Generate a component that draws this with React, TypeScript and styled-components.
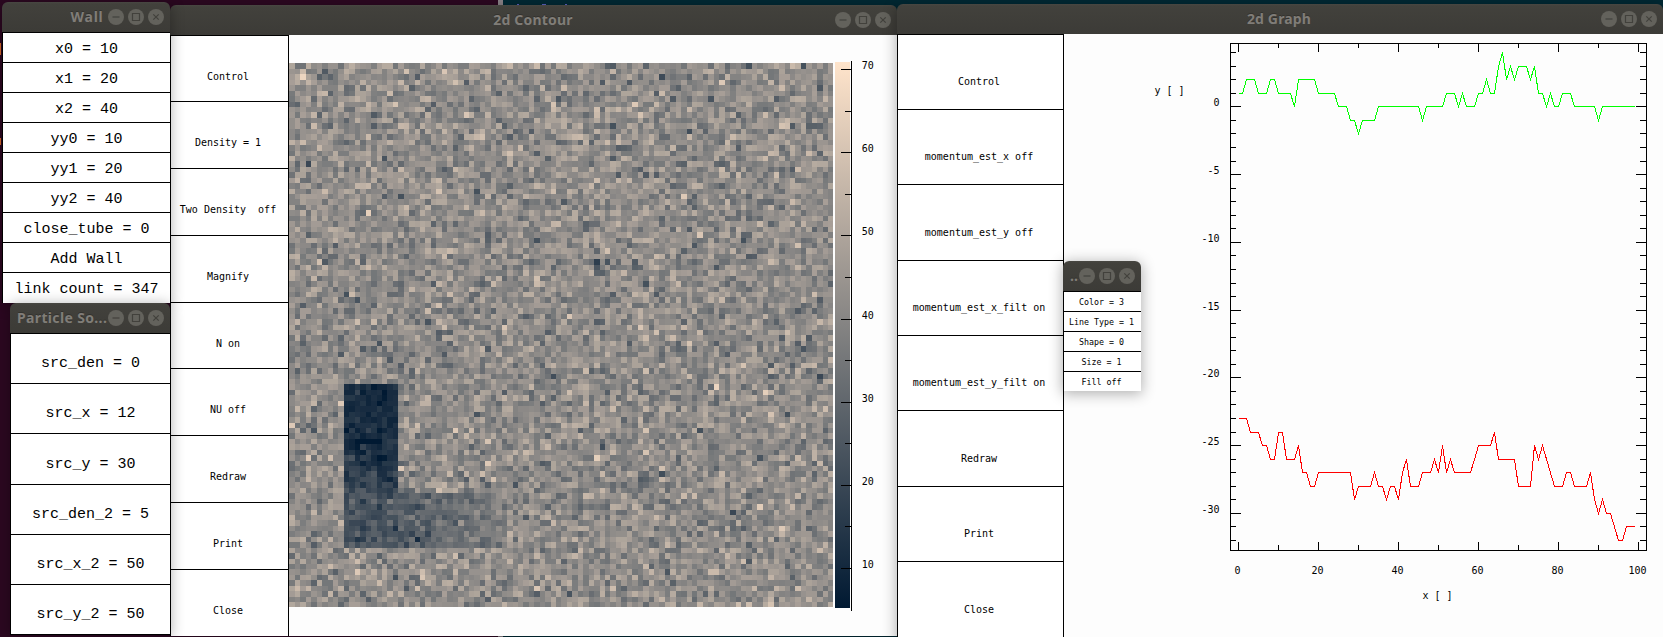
import React, { useLayoutEffect, useRef } from "react";
import styled, { createGlobalStyle, css } from "styled-components";

const GlobalStyle = createGlobalStyle`
  html, body { margin: 0; padding: 0; overflow: hidden; }
  *, *::before, *::after { box-sizing: border-box; }
`;

const MONO = `"Liberation Mono", monospace`;
const MONO_SMALL = `"DejaVu Sans Mono", monospace`;

const Desktop = styled.div`
  position: relative;
  width: 1663px;
  height: 637px;
  overflow: hidden;
  background: linear-gradient(
    to right,
    #2c0821 0 498px,
    #8b8389 498px 503px,
    #002934 503px
  );
`;

const Speck = styled.i<{ $x: number; $y: number; $w: number; $h: number; $color: string }>`
  position: absolute;
  left: ${(p) => p.$x}px;
  top: ${(p) => p.$y}px;
  width: ${(p) => p.$w}px;
  height: ${(p) => p.$h}px;
  background: ${(p) => p.$color};
`;

const Window = styled.section<{ $x: number; $y: number; $w: number; $h: number; $z: number }>`
  position: absolute;
  left: ${(p) => p.$x}px;
  top: ${(p) => p.$y}px;
  width: ${(p) => p.$w}px;
  height: ${(p) => p.$h}px;
  z-index: ${(p) => p.$z};
  display: flex;
  flex-direction: column;
  border-radius: 6px 6px 0 0;
  box-shadow: 0 2px 14px 1px rgba(0, 0, 0, 0.3);
`;

const TitleBar = styled.header`
  display: flex;
  align-items: center;
  flex: none;
  height: 30px;
  padding: 0 6px 0 7px;
  border-radius: 6px 6px 0 0;
  background: linear-gradient(#484742 0, #42413c 2px, #3c3b37 100%);
`;

const Title = styled.h1<{ $align: "center" | "left"; $shift: number; $spacing: number }>`
  flex: 1;
  min-width: 0;
  margin: 0 0 0 ${(p) => p.$shift}px;
  overflow: hidden;
  white-space: pre;
  text-align: ${(p) => p.$align};
  font: 700 14px/20px "Noto Sans", sans-serif;
  letter-spacing: ${(p) => p.$spacing}px;
  color: #807d78;
  text-shadow: 0 -1px 0 #33322e;
`;

const Buttons = styled.div`
  display: flex;
  flex: none;
  gap: 4px;
`;

const RoundButton = styled.svg`
  display: block;
  width: 16px;
  height: 16px;
  fill: none;
  stroke: #42413c;
  stroke-width: 1.2;
`;

const Body = styled.div`
  display: flex;
  flex: 1;
  min-height: 0;
  background: #fdfdfd;
`;

type MenuSize = "large" | "medium" | "tiny";

const menuFont = {
  large: css`
    padding-right: 0;
    font: 15px/16px ${MONO};
  `,
  medium: css`
    padding-right: 3px;
    font: 10px/12px ${MONO_SMALL};
  `,
  tiny: css`
    padding-right: 2px;
    font: 8.3px/10px ${MONO_SMALL};
  `,
};

const MenuColumn = styled.div<{ $w: number; $edge?: boolean }>`
  display: flex;
  flex-direction: column;
  flex: none;
  width: ${(p) => p.$w}px;
  border-left: 1px solid #000;
  border-right: ${(p) => (p.$edge ? "1px solid #000" : "none")};
  background: #fff;
`;

const MenuItem = styled.div<{ $h: number; $size: MenuSize; $drop: number }>`
  display: flex;
  flex: none;
  align-items: center;
  justify-content: center;
  height: ${(p) => p.$h}px;
  padding-top: ${(p) => p.$drop}px;
  border-top: 1px solid #000;
  color: #000;
  white-space: pre;
  ${(p) => menuFont[p.$size]}
`;

const BottomRule = styled.div`
  height: 1px;
  background: #000;
`;

const FieldArea = styled.div`
  display: flex;
  flex: 1;
  min-width: 0;
  padding-top: 26px;
`;

const FieldCanvas = styled.canvas`
  display: block;
  flex: none;
  width: 544px;
  height: 544px;
  margin: 2px 0 0;
`;

const Drawing = styled.svg`
  display: block;
  flex: none;
  font: 10px ${MONO_SMALL};
`;

function WindowButtons() {
  return (
    <Buttons>
      {["M4.5 8h7", "M4.5 4.5h7v7h-7z", "M5.3 5.3l5.4 5.4M10.7 5.3l-5.4 5.4"].map((d) => (
        <RoundButton key={d} viewBox="0 0 16 16">
          <circle cx="8" cy="8" r="8" fill="#63625c" stroke="none" />
          <path d={d} />
        </RoundButton>
      ))}
    </Buttons>
  );
}

function Frame(props: {
  title: string;
  x: number;
  y: number;
  w: number;
  h: number;
  z: number;
  align?: "center" | "left";
  shift?: number;
  spacing?: number;
  children: React.ReactNode;
}) {
  return (
    <Window $x={props.x} $y={props.y} $w={props.w} $h={props.h} $z={props.z}>
      <TitleBar>
        <Title
          $align={props.align ?? "center"}
          $shift={props.shift ?? 0}
          $spacing={props.spacing ?? 0.15}
        >
          {props.title}
        </Title>
        <WindowButtons />
      </TitleBar>
      <Body>{props.children}</Body>
    </Window>
  );
}

function Menu(props: {
  items: string[];
  heights: number[];
  width: number;
  size: MenuSize;
  drop: number;
  edge?: boolean;
  closed?: boolean;
}) {
  return (
    <MenuColumn $w={props.width} $edge={props.edge}>
      {props.items.map((label, i) => (
        <MenuItem key={label} $h={props.heights[i]} $size={props.size} $drop={props.drop}>
          {label}
        </MenuItem>
      ))}
      {props.closed && <BottomRule />}
    </MenuColumn>
  );
}

/* Density field: Poisson-like noise around a mean, with an evacuated L-shaped tube. */
const CELLS = 100;

function makeRandom(seed: number) {
  let s = seed;
  return () => {
    s = (s + 0x6d2b79f5) | 0;
    let t = Math.imul(s ^ (s >>> 15), 1 | s);
    t = (t + Math.imul(t ^ (t >>> 7), 61 | t)) ^ t;
    return ((t ^ (t >>> 14)) >>> 0) / 4294967296;
  };
}

function meanDensity(col: number, row: number) {
  if (row < 59 || row > 88 || col < 10 || col > 39) return 42;
  if (col < 20) {
    if (row === 69 && col > 11 && col < 17) return 3;
    if (row < 70) return 11;
    if (row < 79) return 12 + (row - 70) * (col > 15 ? 0.6 : 1.2);
    return 24;
  }
  return row < 79 ? 42 : 26 + (col - 20) * 0.6;
}

function densityColor(v: number) {
  const t = Math.max(-1, Math.min(1, (v - 38) / 32.8));
  const end = t < 0 ? [0, 25, 50] : [255, 228, 203];
  const k = Math.abs(t);
  const c = end.map((e) => Math.round(128 + (e - 128) * k));
  return `rgb(${c[0]},${c[1]},${c[2]})`;
}

function DensityField() {
  const ref = useRef<HTMLCanvasElement>(null);
  useLayoutEffect(() => {
    const ctx = ref.current!.getContext("2d")!;
    const rnd = makeRandom(347);
    const edge = (i: number) => Math.ceil(i * 5.44 - 1e-6);
    for (let row = 0; row < CELLS; row++) {
      for (let col = 0; col < CELLS; col++) {
        const mean = meanDensity(col, row);
        const g = Math.sqrt(-2 * Math.log(rnd() + 1e-9)) * Math.cos(2 * Math.PI * rnd());
        const spread = Math.sqrt(mean) * (mean < 42 ? 0.85 : 1);
        ctx.fillStyle = densityColor(Math.round(mean + g * spread));
        ctx.fillRect(edge(col), edge(row), edge(col + 1) - edge(col), edge(row + 1) - edge(row));
      }
    }
  }, []);
  return <FieldCanvas ref={ref} width={544} height={544} />;
}

function ColorScale() {
  const y = (v: number) => Math.round(8 + (70 - v) * 8.317);
  const ticks = Array.from({ length: 13 }, (_, i) => 70 - i * 5);
  return (
    <Drawing width="64" height="560" viewBox="0 0 64 560">
      <defs>
        <linearGradient id="scale" x1="0" y1="0" x2="0" y2="1">
          <stop offset="0" stopColor="#ffe4cb" />
          <stop offset="0.5" stopColor="#808080" />
          <stop offset="1" stopColor="#001932" />
        </linearGradient>
      </defs>
      <rect x="2" y="1" width="15" height="546" fill="url(#scale)" />
      <g shapeRendering="crispEdges">
        <rect x="18" y="0" width="1" height="550" />
        {ticks.map((v) => (
          <rect key={v} x={v % 10 ? 12 : 8} y={y(v)} width={v % 10 ? 6 : 10} height="1" />
        ))}
      </g>
      {ticks
        .filter((v) => v % 10 === 0)
        .map((v) => (
          <text key={v} x="34.7" y={y(v)} textAnchor="middle">
            {v}
          </text>
        ))}
    </Drawing>
  );
}

const greenSeries: [number, number][] = [
  [0, 1], [1, 1], [2, 2], [4, 2], [5, 1], [7, 1], [8, 2], [9, 2], [10, 1], [13, 1], [14, 0],
  [15, 2], [19, 2], [20, 1], [24, 1], [25, 0], [27, 0], [28, -1], [29, -1], [30, -2], [31, -1],
  [34, -1], [35, 0], [45, 0], [46, -1], [47, 0], [51, 0], [52, 1], [54, 1], [55, 0], [56, 1],
  [57, 0], [59, 0], [60, 1], [61, 1], [62, 2], [63, 1], [64, 1], [65, 3], [66, 4], [67, 2],
  [68, 3], [69, 2], [70, 3], [72, 3], [73, 2], [74, 3], [75, 1], [76, 1], [77, 0], [78, 1],
  [79, 0], [80, 0], [81, 1], [83, 1], [84, 0], [89, 0], [90, -1], [91, 0], [99, 0],
];

const redSeries: [number, number][] = [
  [0, -23], [2, -23], [3, -24], [5, -24], [6, -25], [7, -25], [8, -26], [9, -26], [10, -24],
  [11, -24], [12, -26], [14, -26], [15, -25], [16, -27], [17, -27], [18, -28], [19, -28],
  [20, -27], [28, -27], [29, -29], [30, -28], [33, -28], [34, -27], [35, -28], [36, -28],
  [37, -29], [38, -28], [39, -28], [40, -29], [41, -27], [42, -26], [43, -28], [45, -28],
  [46, -27], [48, -27], [49, -26], [50, -27], [51, -25], [52, -27], [53, -26], [54, -27],
  [58, -27], [59, -26], [60, -25], [63, -25], [64, -24], [65, -26], [69, -26], [70, -28],
  [73, -28], [74, -25], [75, -26], [76, -25], [79, -28], [81, -28], [82, -27], [83, -27],
  [84, -28], [87, -28], [88, -27], [89, -29], [90, -30], [91, -29], [92, -30], [93, -30],
  [95, -32], [96, -32], [97, -31], [99, -31],
];

function Graph() {
  const px = (v: number) => 174 + v * 4;
  const py = (v: number) => Math.round(72.35 - v * 13.55);
  const points = (s: [number, number][]) =>
    s.map(([a, b]) => `${px(a) + 0.5},${py(b) + 0.5}`).join(" ");
  const xs = Array.from({ length: 11 }, (_, i) => i * 10);
  const ys = Array.from({ length: 37 }, (_, i) => 4 - i);
  return (
    <Drawing width="599" height="603" viewBox="0 0 599 603">
      <g shapeRendering="crispEdges">
        <rect x="166.5" y="9.5" width="416" height="507" fill="none" stroke="#000" />
        {xs.map((v) => {
          const top = v % 20 ? 4 : 8;
          const bottom = v % 20 ? 5 : 8;
          return (
            <g key={v}>
              <rect x={px(v)} y="10" width="1" height={top} />
              <rect x={px(v)} y={516 - bottom} width="1" height={bottom} />
            </g>
          );
        })}
        {ys.map((v) => {
          const left = v % 5 ? 5 : 10;
          const right = v % 5 ? 6 : 10;
          return (
            <g key={v}>
              <rect x="167" y={py(v)} width={left} height="1" />
              <rect x={582 - right} y={py(v)} width={right} height="1" />
            </g>
          );
        })}
        <polyline points={points(greenSeries)} fill="none" stroke="#00ff00" />
        <polyline points={points(redSeries)} fill="none" stroke="#ff0000" />
      </g>
      {ys
        .filter((v) => v % 5 === 0)
        .map((v) => (
          <text key={v} x="155.5" y={py(v)} textAnchor="end">
            {v}
          </text>
        ))}
      {xs
        .filter((v) => v % 20 === 0)
        .map((v) => (
          <text key={v} x={px(v) - 0.5} y="540" textAnchor="middle">
            {v}
          </text>
        ))}
      <text x="90.5" y="60">y [ ]</text>
      <text x="358.5" y="565">x [ ]</text>
    </Drawing>
  );
}

export default function App() {
  return (
    <Desktop>
      <GlobalStyle />
      <Speck $x={0} $y={43} $w={1} $h={12} $color="#d9692b" />
      <Speck $x={0} $y={138} $w={1} $h={7} $color="#d9692b" />
      <Speck $x={517} $y={4} $w={2} $h={1} $color="#5b5fc0" />
      <Speck $x={542} $y={4} $w={4} $h={1} $color="#5b5fc0" />
      <Speck $x={565} $y={4} $w={2} $h={1} $color="#5b5fc0" />

      <Frame title="2d Contour" x={170} y={5} w={727} h={631} z={1} shift={54} spacing={0.2}>
        <Menu
          items={["Control", "Density = 1", "Two Density  off", "Magnify", "N on", "NU off", "Redraw", "Print", "Close"]}
          heights={[66, 67, 67, 67, 66, 67, 67, 67, 67]}
          width={119}
          size="medium"
          drop={16}
          edge
        />
        <FieldArea>
          <DensityField />
          <ColorScale />
        </FieldArea>
      </Frame>

      <Frame title="Wall" x={2} y={2} w={168} h={301} z={2} shift={57} spacing={0.7}>
        <Menu
          items={["x0 = 10", "x1 = 20", "x2 = 40", "yy0 = 10", "yy1 = 20", "yy2 = 40", "close_tube = 0", "Add Wall", "link count = 347"]}
          heights={[30, 30, 30, 30, 30, 30, 30, 30, 31]}
          width={168}
          size="large"
          drop={4}
        />
      </Frame>

      <Frame title="Particle So..." x={10} y={303} w={160} h={332} z={3} align="left" spacing={0.35}>
        <Menu
          items={["src_den = 0", "src_x = 12", "src_y = 30", "src_den_2 = 5", "src_x_2 = 50", "src_y_2 = 50"]}
          heights={[50, 50, 51, 50, 50, 50]}
          width={160}
          size="large"
          drop={11}
          closed
        />
      </Frame>

      <Frame title="2d Graph" x={897} y={4} w={766} h={640} z={4} shift={53}>
        <Menu
          items={["Control", "momentum_est_x off", "momentum_est_y off", "momentum_est_x_filt on", "momentum_est_y_filt on", "Redraw", "Print", "Close"]}
          heights={[75, 75, 76, 75, 75, 76, 75, 76]}
          width={167}
          size="medium"
          drop={20}
          edge
        />
        <Graph />
      </Frame>

      <Frame title="..." x={1063} y={261} w={78} h={130} z={5} align="left">
        <Menu
          items={["Color = 3", "Line Type = 1", "Shape = 0", "Size = 1", "Fill off"]}
          heights={[20, 20, 20, 20, 20]}
          width={78}
          size="tiny"
          drop={1}
        />
      </Frame>
    </Desktop>
  );
}
